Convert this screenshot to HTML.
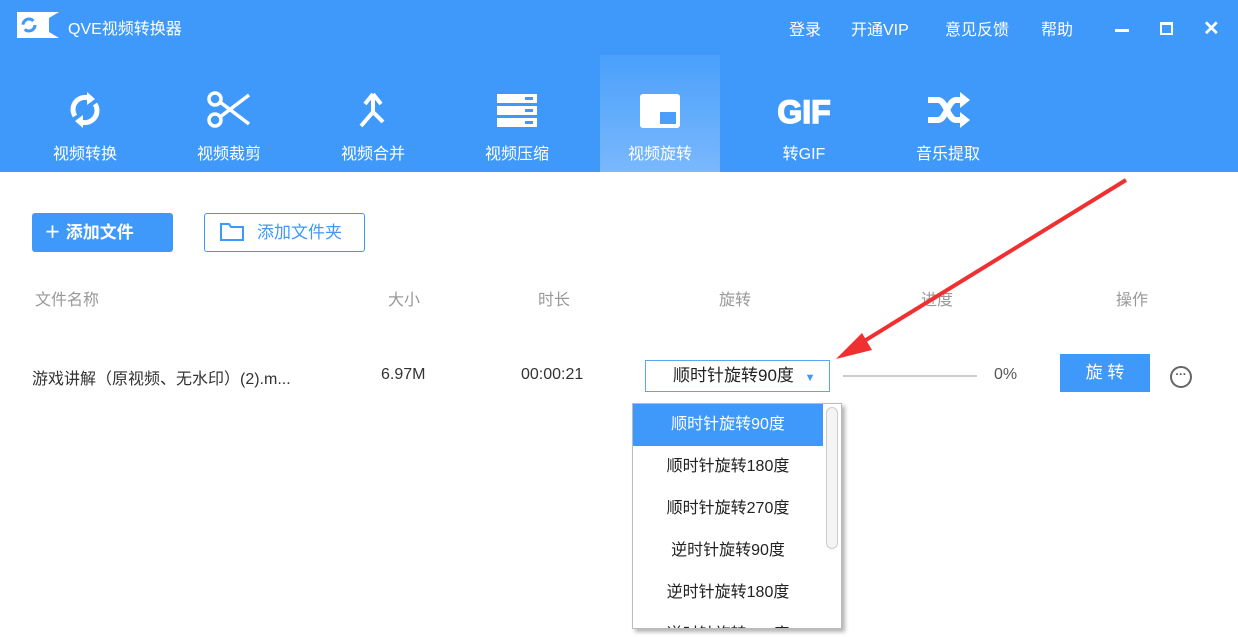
<!DOCTYPE html>
<html><head><meta charset="utf-8"><style>
*{margin:0;padding:0;box-sizing:border-box}
body{width:1238px;height:637px;overflow:hidden;background:#fff;font-family:"Liberation Sans","Noto Sans CJK SC",sans-serif;position:relative}
.hdr{position:absolute;left:0;top:0;width:1238px;height:172px;background:#3f99fb}
.sel{position:absolute;left:600px;top:55px;width:120px;height:117px;background:linear-gradient(#4aa0fb,#7ab8fc)}
.t{position:absolute;color:#fff;font-size:16px;white-space:nowrap}
.tab{position:absolute;top:90px;width:120px;text-align:center;color:#fff;font-size:16px}
.tab svg{display:block;margin:0 auto 10px;height:40px}
.g{position:absolute;color:#999;font-size:16px}
.d{position:absolute;color:#333;font-size:16px;white-space:nowrap}
.opt{height:42px;line-height:42px;text-align:center;font-size:16px;color:#222;width:190px}
</style></head><body>
<div class="hdr"></div>
<div class="sel"></div>
<div style="position:absolute;left:17px;top:12px;width:42px;height:26px;background:#fff"></div>
<svg style="position:absolute;left:17px;top:12px" width="42" height="26"><circle cx="12" cy="13" r="6" fill="none" stroke="#3f99fb" stroke-width="3" stroke-dasharray="14 5"/><path d="M32 6 L42 0 L42 26 L32 20Z" fill="#3f99fb"/></svg>
<div class="t" style="left:68px;top:15px">QVE视频转换器</div>
<div class="t" style="left:789px;top:16px">登录</div>
<div class="t" style="left:851px;top:16px">开通VIP</div>
<div class="t" style="left:945px;top:16px">意见反馈</div>
<div class="t" style="left:1041px;top:16px">帮助</div>
<div style="position:absolute;left:1115px;top:29px;width:14px;height:3px;background:#fff"></div>
<div style="position:absolute;left:1160px;top:22px;width:13px;height:13px;border:2px solid #fff;border-top-width:3px"></div>
<div class="t" style="left:1203px;top:16px;font-size:20px;font-weight:bold">✕</div>

<div class="tab" style="left:25px"><svg width="40" height="40" viewBox="0 0 40 40"><path d="M10 26 A12 12 0 0 1 26 9" fill="none" stroke="#fff" stroke-width="5"/><path d="M22 2 L30 9 L22 15Z" fill="#fff"/><path d="M30 14 A12 12 0 0 1 14 31" fill="none" stroke="#fff" stroke-width="5"/><path d="M18 38 L10 31 L18 25Z" fill="#fff"/></svg>视频转换</div>
<div class="tab" style="left:169px"><svg width="48" height="40" viewBox="0 0 48 40"><circle cx="10" cy="9" r="6" fill="none" stroke="#fff" stroke-width="3.5"/><circle cx="10" cy="30" r="6" fill="none" stroke="#fff" stroke-width="3.5"/><path d="M15 12 L44 34 M15 27 L44 5" stroke="#fff" stroke-width="3.5"/></svg>视频裁剪</div>
<div class="tab" style="left:313px"><svg width="40" height="40" viewBox="0 0 40 40"><path d="M20 4 L12 14 M20 4 L28 14 M20 4 V22 L8 36 M20 22 L30 32" stroke="#fff" stroke-width="4" fill="none"/></svg>视频合并</div>
<div class="tab" style="left:457px"><svg width="44" height="40" viewBox="0 0 44 40"><rect x="2" y="4" width="40" height="9" fill="#fff"/><rect x="2" y="16" width="40" height="9" fill="#fff"/><rect x="2" y="28" width="40" height="9" fill="#fff"/><rect x="30" y="7" width="8" height="3" fill="#3f99fb"/><rect x="30" y="19" width="8" height="3" fill="#3f99fb"/><rect x="30" y="31" width="8" height="3" fill="#3f99fb"/></svg>视频压缩</div>
<div class="tab" style="left:600px"><svg width="44" height="40" viewBox="0 0 44 40"><rect x="2" y="4" width="40" height="34" rx="3" fill="#fff"/><rect x="22" y="22" width="16" height="12" fill="#4a9ffb"/></svg>视频旋转</div>
<div class="tab" style="left:744px"><svg width="60" height="40" viewBox="0 0 60 40"><text x="30" y="33" text-anchor="middle" font-family="Liberation Sans Narrow, Liberation Sans" font-weight="bold" font-size="32" fill="#fff" stroke="#fff" stroke-width="1.5">GIF</text></svg>转GIF</div>
<div class="tab" style="left:888px"><svg width="48" height="40" viewBox="0 0 48 40"><path d="M4 10 H14 C22 10 24 30 32 30 H38 M4 30 H14 C22 30 24 10 32 10 H38" stroke="#fff" stroke-width="6" fill="none"/><path d="M36 2 L46 10 L36 18Z M36 22 L46 30 L36 38Z" fill="#fff"/></svg>音乐提取</div>

<div style="position:absolute;left:32px;top:213px;width:141px;height:39px;background:#3f99fb;border-radius:3px;color:#fff;font-size:17px;font-weight:bold;line-height:39px;padding-left:12px">＋ 添加文件</div>
<div style="position:absolute;left:204px;top:213px;width:161px;height:39px;border:1px solid #3f99fb;border-radius:3px;color:#3f99fb;font-size:17px;line-height:37px;padding-left:52px">添加文件夹</div>
<svg style="position:absolute;left:219px;top:222px" width="26" height="20"><path d="M2 2 H10 L12 5 H24 V18 H2Z" fill="none" stroke="#3f99fb" stroke-width="2"/></svg>

<div class="g" style="left:35px;top:286px">文件名称</div>
<div class="g" style="left:388px;top:286px">大小</div>
<div class="g" style="left:538px;top:286px">时长</div>
<div class="g" style="left:719px;top:286px">旋转</div>
<div class="g" style="left:921px;top:286px">进度</div>
<div class="g" style="left:1116px;top:286px">操作</div>

<div class="d" style="left:32px;top:365px">游戏讲解（原视频、无水印）(2).m...</div>
<div class="d" style="left:381px;top:366px">6.97M</div>
<div class="d" style="left:521px;top:366px">00:00:21</div>
<div style="position:absolute;left:645px;top:360px;width:185px;height:32px;border:1px solid #5aa6f0;font-size:17px;line-height:30px;padding-left:27px;color:#222">顺时针旋转90度 <span style="color:#3f99fb;font-size:11px;margin-left:6px">▼</span></div>
<div style="position:absolute;left:843px;top:375px;width:134px;height:2px;background:#ccc"></div>
<div class="d" style="left:994px;top:366px;color:#555">0%</div>
<div style="position:absolute;left:1060px;top:354px;width:90px;height:38px;background:#3f99fb;color:#fff;font-size:17px;text-align:center;line-height:38px">旋 转</div>
<div style="position:absolute;left:1170px;top:366px;width:22px;height:22px;border:2px solid #666;border-radius:50%;font-size:11px;text-align:center;line-height:14px;color:#444;font-weight:bold">···</div>

<div style="position:absolute;left:632px;top:403px;width:210px;height:226px;border:1px solid #bbb;background:#fff;box-shadow:3px 3px 4px rgba(0,0,0,.3);overflow:hidden">
<div class="opt" style="background:#3f99fb;color:#fff">顺时针旋转90度</div>
<div class="opt">顺时针旋转180度</div>
<div class="opt">顺时针旋转270度</div>
<div class="opt">逆时针旋转90度</div>
<div class="opt">逆时针旋转180度</div>
<div class="opt">逆时针旋转270度</div>
<div style="position:absolute;left:193px;top:3px;width:12px;height:142px;border:1px solid #ccc;border-radius:6px;background:#f4f4f4"></div>
</div>

<svg style="position:absolute;left:0;top:0" width="1238" height="637"><path d="M1126 180 L848 351" stroke="#f03030" stroke-width="4"/><path d="M836 359 L862 333 L872 350Z" fill="#f03030"/></svg>
</body></html>
